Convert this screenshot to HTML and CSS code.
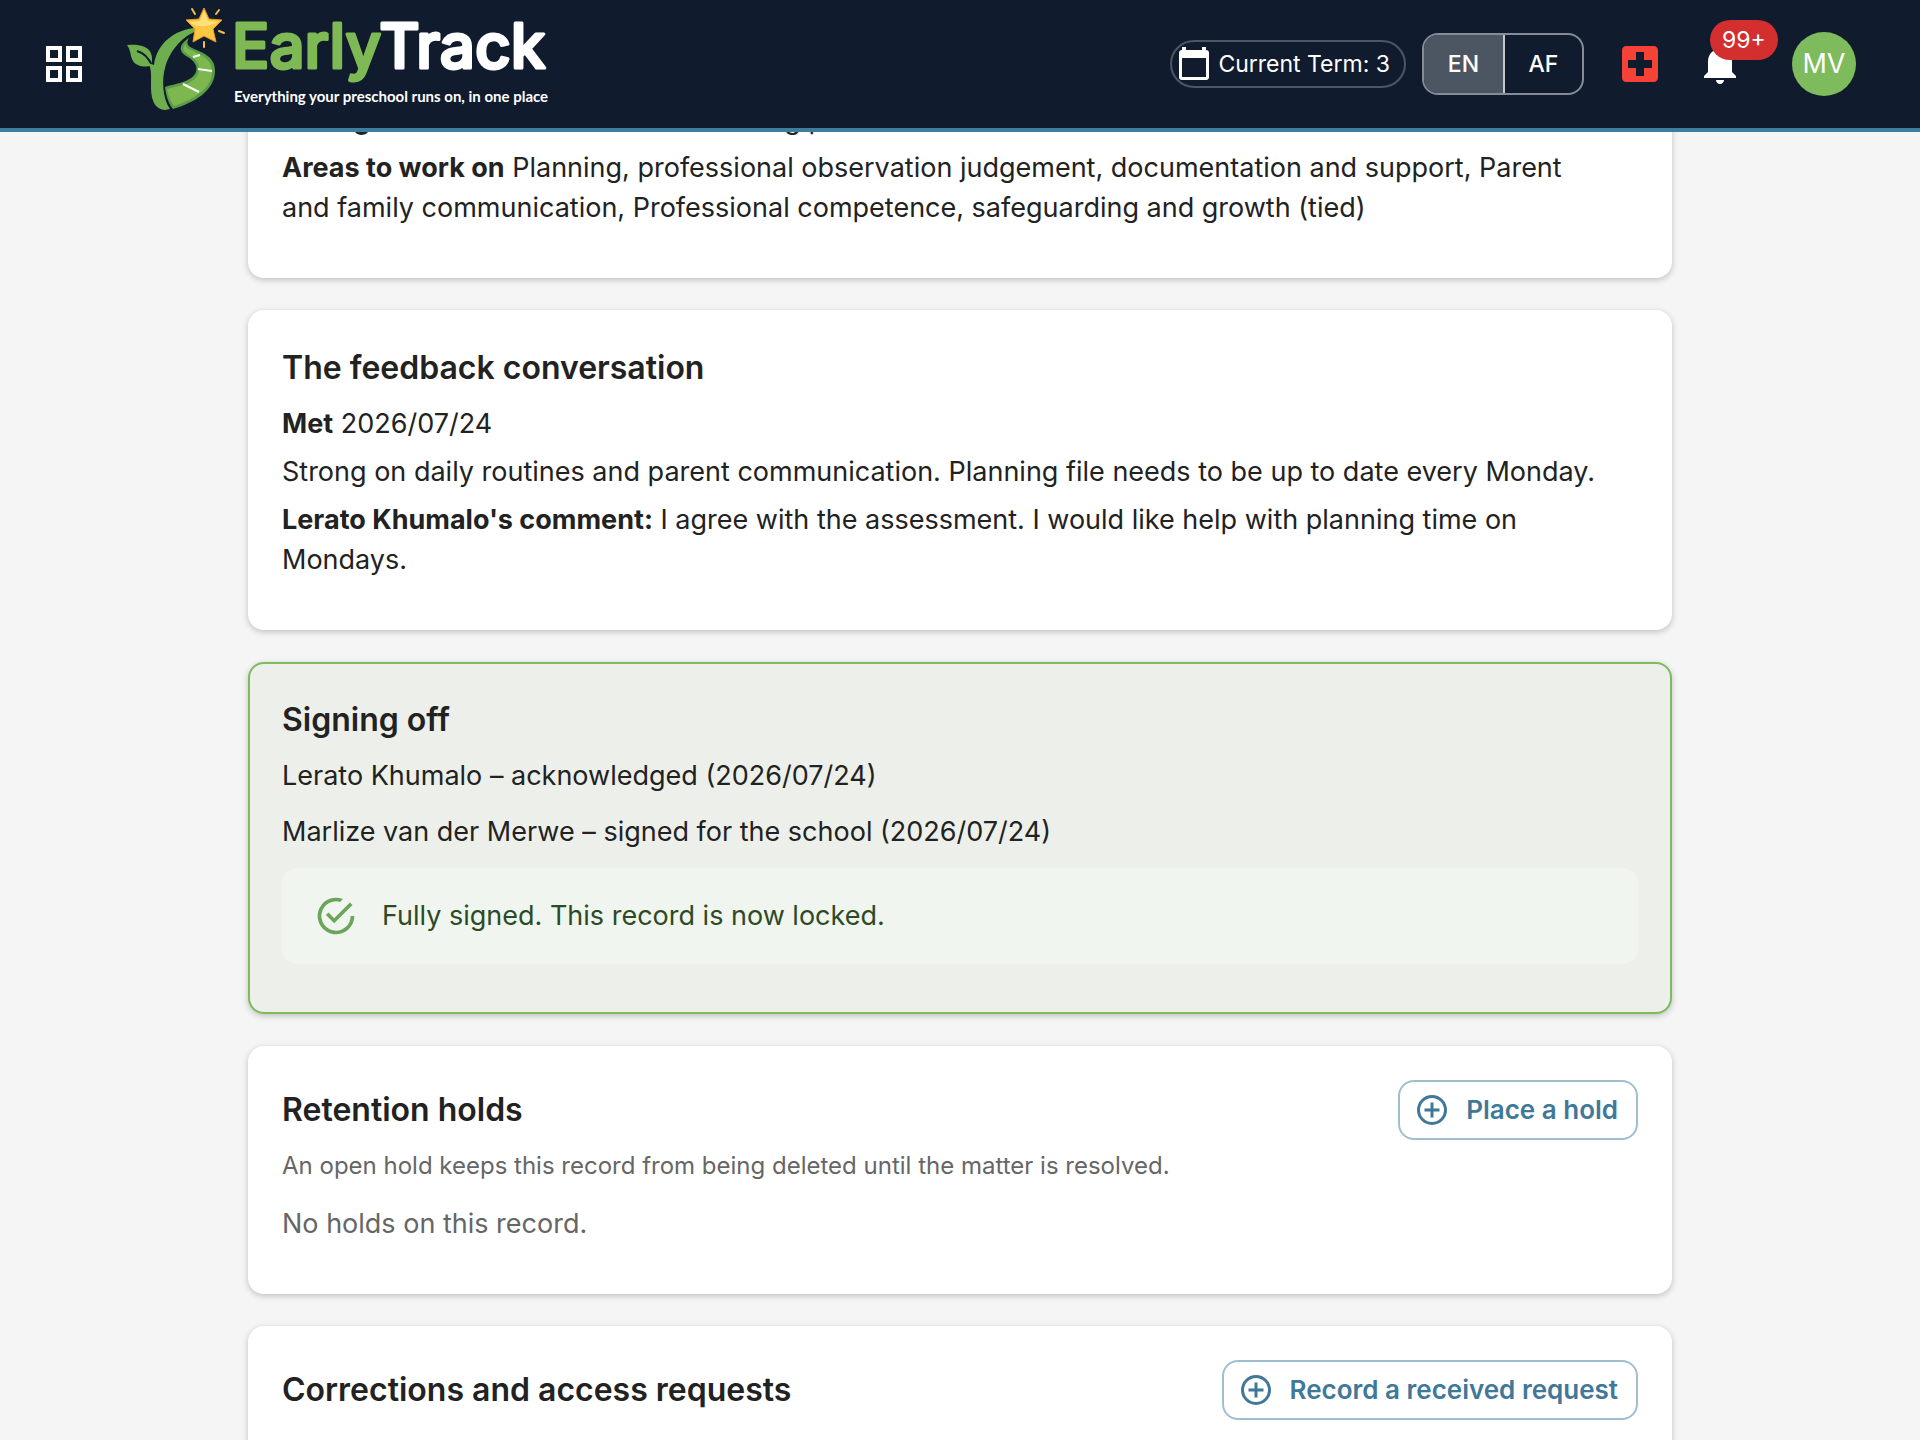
FILE: index.html
```html
<!DOCTYPE html>
<html lang="en">

<head>
  <meta charset="UTF-8">
  <meta name="viewport" content="width=device-width, initial-scale=1.0">
  <title>EarlyTrack</title>
  <link rel="stylesheet" href="styles.css">
</head>

<body>
  <header class="topbar">
    <button class="icon-btn menu-btn" aria-label="Open menu">
      <svg class="icon" viewBox="0 0 24 24" fill="#fff">
        <path d="M3 3v8h8V3H3zm6 6H5V5h4v4zm-6 4v8h8v-8H3zm6 6H5v-4h4v4zm4-16v8h8V3h-8zm6 6h-4V5h4v4zm-6 4v8h8v-8h-8zm6 6h-4v-4h4v4z" />
      </svg>
    </button>
    <a class="brand" href="#">
      <svg class="brand-mark" viewBox="0 0 112 128">
        <!-- leaf -->
        <path d="M7 45C15 44 25 45 29 50C32 54 33 58 31 66C25 67 17 67 13 61C10 56 11 50 7 45z" fill="#6fae4f" />
        <path d="M17 51C24 53 29 58 32 66" fill="none" stroke="#101b2d" stroke-width="2" />
        <!-- stem -->
        <path d="M74 28C56 30 37 42 34 65L28 63C32 69 31 77 31 86C31 99 34 109 45 110L50 109C42 98 42 78 45 68C49 53 60 37 77 31z" fill="#6fae4f" />
        <!-- road -->
        <path d="M69 38C59 44 58 51 66 56C74 60 78 66 76 72C72 82 57 83 45 87C46 95 48 103 53 109C74 103 94 91 95 72C96 58 84 53 74 49C67 46 66 43 69 38z" fill="#5a9c48" />
        <path d="M67 43C61 48 63 52 70 56C78 60 81 67 78 74C74 84 59 86 47 89C48 95 50 101 54 106C74 99 91 89 92 73C93 60 83 56 73 51C66 48 65 47 67 43z" fill="#7cb84e" />
        <path d="M73 57l7-2M78 69l14 2M63 84l16 8" fill="none" stroke="#fff" stroke-width="2" />
        <!-- star -->
        <path d="M84 8l5 11 13 1-9 9 3 13-12-6-11 6 2-13-9-9 13-1z" fill="#fdc741" stroke="#e89a25" stroke-linejoin="round" />
        <path d="M84 11l4 10 10 1c-9 5-20 6-29 0l11-1z" fill="#ffe07a" />
        <path d="M72 9l3 5M96 14l3-4M99 31l5 2M84 42v5" fill="none" stroke="#f4c046" stroke-width="2" stroke-linecap="round" />
      </svg>
      <span class="brand-text">
        <svg class="brand-name" viewBox="0 0 320 50">
          <text y="46"><tspan class="brand-early">Early</tspan><tspan class="brand-track">Track</tspan></text>
        </svg>
        <span class="brand-tagline">Everything your preschool runs on, in one place</span>
      </span>
    </a>

    <div class="topbar-actions">
      <div class="term">
        <svg class="term-icon" viewBox="0 0 32 36" fill="#fff">
          <path d="M4 1h4v3h16V1h4v3a3 3 0 0 1 3 3v24a3 3 0 0 1-3 3H4a3 3 0 0 1-3-3V7a3 3 0 0 1 3-3zM4 12v19h24V12z" fill-rule="evenodd" />
        </svg>
        <span>Current Term: 3</span>
      </div>
      <div class="lang" role="group" aria-label="Language">
        <button class="lang-btn lang-btn-active" aria-pressed="true">EN</button>
        <button class="lang-btn" aria-pressed="false">AF</button>
      </div>
      <button class="icon-btn first-aid" aria-label="First aid">
        <svg class="icon" viewBox="0 0 24 24" fill="#f44336">
          <path d="M19 3H5c-1.100 0-2 .9-2 2v14c0 1.100.9 2 2 2h14c1.100 0 2-.9 2-2V5c0-1.100-.9-2-2-2zm-1 11h-4v4h-4v-4H6v-4h4V6h4v4h4v4z" />
        </svg>
      </button>
      <button class="icon-btn bell" aria-label="Notifications">
        <svg class="icon" viewBox="0 0 24 24" fill="#fff">
          <path d="M12 22c1.100 0 2-.9 2-2h-4c0 1.100.89 2 2 2zm6-6v-5c0-3.070-1.640-5.640-4.500-6.320V4c0-.83-.67-1.500-1.500-1.500s-1.500.67-1.500 1.500v.68C7.630 5.360 6 7.920 6 11v5l-2 2v1h16v-1l-2-2z" />
        </svg>
        <span class="badge">99+</span>
      </button>
      <button class="avatar" aria-label="Account">MV</button>
    </div>
  </header>

  <main class="content">
    <section class="card">
      <p class="line"><strong>Strongest areas</strong> Child care and teaching practice</p>
      <p class="line"><strong>Areas to work on</strong> Planning, professional observation judgement, documentation and support, Parent and&nbsp;family communication, Professional competence, safeguarding and growth (tied)</p>
    </section>

    <section class="card">
      <h2 class="card-title">The feedback conversation</h2>
      <p class="line"><strong>Met</strong> 2026/07/24</p>
      <p class="line">Strong on daily routines and parent communication. Planning file needs to be up to date every Monday.</p>
      <p class="line"><strong>Lerato Khumalo's comment:</strong> I agree with the assessment. I would like help with planning time on Mondays.</p>
    </section>

    <section class="card card-signed">
      <h2 class="card-title">Signing off</h2>
      <p class="line">Lerato Khumalo – acknowledged (2026/07/24)</p>
      <p class="line">Marlize van der Merwe – signed for the school (2026/07/24)</p>
      <div class="alert" role="status">
        <svg class="alert-icon" viewBox="0 0 24 24" fill="#6aa55a">
          <path d="M20 12a8 8 0 1 1-5.800-7.690l1.570-1.570A10 10 0 1 0 22 12zM7.910 10.080L6.500 11.500 11 16 21 6l-1.410-1.420L11 13.170z" />
        </svg>
        <span>Fully signed. This record is now locked.</span>
      </div>
    </section>

    <section class="card">
      <div class="card-head">
        <h2 class="card-title">Retention holds</h2>
        <button class="outline-btn">
          <svg class="btn-icon" viewBox="0 0 24 24" fill="currentColor">
            <path d="M13 7h-2v4H7v2h4v4h2v-4h4v-2h-4V7zm-1-5a10 10 0 1 0 0 20 10 10 0 0 0 0-20zm0 18a8 8 0 1 1 0-16 8 8 0 0 1 0 16z" />
          </svg>
          Place a hold
        </button>
      </div>
      <p class="hint">An open hold keeps this record from being deleted until the matter is resolved.</p>
      <p class="line muted">No holds on this record.</p>
    </section>

    <section class="card">
      <div class="card-head">
        <h2 class="card-title">Corrections and access requests</h2>
        <button class="outline-btn">
          <svg class="btn-icon" viewBox="0 0 24 24" fill="currentColor">
            <path d="M13 7h-2v4H7v2h4v4h2v-4h4v-2h-4V7zm-1-5a10 10 0 1 0 0 20 10 10 0 0 0 0-20zm0 18a8 8 0 1 1 0-16 8 8 0 0 1 0 16z" />
          </svg>
          Record a received request
        </button>
      </div>
    </section>
  </main>
</body>

</html>
```
FILE: styles.css
```css
* {
  box-sizing: border-box;
}

body {
  margin: 0;
  background: #f5f5f5;
  color: #222;
  font-family: "Inter", "Roboto", sans-serif;
  font-size: 27px;
  line-height: 40px;
}

h2,
p {
  margin: 0;
}

button {
  padding: 0;
  border: 0;
  background: none;
  color: inherit;
  font: inherit;
  cursor: pointer;
}

svg {
  display: block;
  flex: none;
}

/* top bar */
.topbar {
  position: fixed;
  top: 0;
  left: 0;
  right: 0;
  z-index: 10;
  display: flex;
  align-items: center;
  height: 132px;
  padding: 0 64px 0 40px;
  border-bottom: 4px solid #3f7d9e;
  background: #101b2d;
  color: #fff;
}

.icon {
  width: 48px;
  height: 48px;
}

.brand {
  display: flex;
  align-items: center;
  margin-left: 32px;
  color: #fff;
  text-decoration: none;
}

.brand-mark {
  width: 112px;
  height: 128px;
}

.brand-text {
  display: flex;
  flex-direction: column;
  gap: 14px;
  white-space: nowrap;
}

.brand-name {
  width: 320px;
  height: 50px;
  overflow: visible;
  font-size: 62px;
  font-weight: 500;
  stroke-width: 3px;
  stroke-linejoin: round;
}

.brand-early {
  fill: #7fb955;
  stroke: #7fb955;
}

.brand-track {
  fill: #fff;
  stroke: #fff;
}

.brand-tagline {
  padding-left: 2px;
  font-family: "Lato", sans-serif;
  font-size: 15px;
  font-weight: 700;
  line-height: 20px;
}

.topbar-actions {
  display: flex;
  align-items: center;
  margin-left: auto;
}

.term {
  display: flex;
  align-items: center;
  gap: 8px;
  height: 48px;
  padding: 0 14px 0 6px;
  border: 2px solid #4d5665;
  border-radius: 24px;
  font-size: 23px;
}

.term-icon {
  width: 32px;
  height: 36px;
}

.lang {
  display: flex;
  height: 62px;
  margin-left: 16px;
  border: 2px solid #868c96;
  border-radius: 16px;
  overflow: hidden;
}

.lang-btn {
  width: 77px;
  font-size: 23px;
  font-weight: 500;
}

.lang-btn-active {
  width: 81px;
  border-right: 2px solid #c3c6ca;
  background: #4c5562;
}

.first-aid {
  margin-left: 32px;
}

.bell {
  position: relative;
  margin-left: 32px;
}

.badge {
  position: absolute;
  top: -20px;
  left: 14px;
  height: 40px;
  padding: 0 12px;
  border-radius: 20px;
  background: #d32f2f;
  font-size: 23px;
}

.avatar {
  width: 64px;
  height: 64px;
  margin-left: 48px;
  border-radius: 50%;
  background: #7dbb5c;
}

/* page */
.content {
  display: flex;
  flex-direction: column;
  gap: 32px;
  max-width: 1424px;
  margin: 0 auto;
  padding: 66px 0 32px;
}

.card {
  padding: 34px 34px 50px;
  border-radius: 16px;
  background: #fff;
  box-shadow: 0 2px 6px rgba(0, 0, 0, 0.22);
}

.card-title {
  margin-bottom: 12px;
  font-size: 32px;
  font-weight: 600;
  line-height: 48px;
}

.line + .line {
  margin-top: 8px;
}

.line strong {
  font-weight: 700;
}

.card-signed {
  padding: 32px 32px 48px;
  border: 2px solid #7dbb5c;
  background: #edf0ea;
}

.card-signed .line + .line {
  margin-top: 16px;
}

.alert {
  display: flex;
  align-items: center;
  gap: 24px;
  margin-top: 16px;
  padding: 28px 32px;
  border-radius: 16px;
  background: #f0f6ef;
  color: #2c4a26;
}

.alert-icon {
  width: 44px;
  height: 44px;
  margin: -2px 0;
}

.card-head {
  display: flex;
  align-items: center;
  justify-content: space-between;
  margin-bottom: 8px;
}

.card-head .card-title {
  margin: 0;
}

.outline-btn {
  display: flex;
  align-items: center;
  gap: 16px;
  height: 60px;
  padding: 0 18px 0 14px;
  border: 2px solid #9fbecf;
  border-radius: 16px;
  color: #3f7899;
  font-size: 26px;
  font-weight: 600;
}

.btn-icon {
  width: 36px;
  height: 36px;
}

.hint {
  margin-bottom: 20px;
  color: #666;
  font-size: 24px;
  line-height: 36px;
}

.muted {
  color: #666;
}
```
